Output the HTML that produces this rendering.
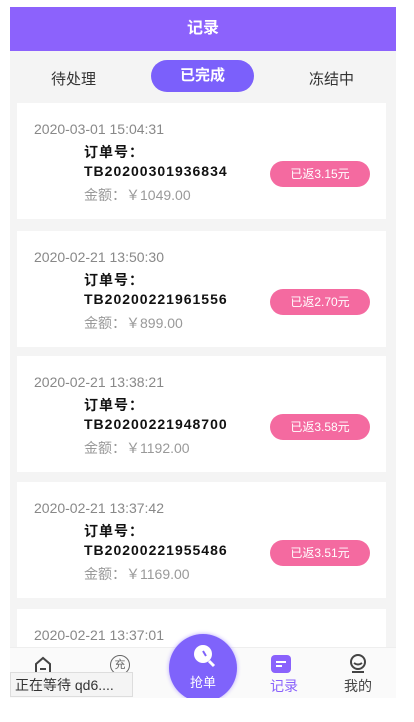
<!DOCTYPE html><html><head><meta charset="utf-8"><style>
body{margin:0;width:414px;height:722px;background:#fff;font-family:"Liberation Sans","Noto Sans CJK SC",sans-serif;position:relative;overflow:hidden}
.wrap{position:absolute;left:10px;top:7px;width:386px;height:691px;background:#f4f4f4;overflow:hidden}
.hd{height:44px;background:#8c62fc;color:#fff;font-weight:bold;font-size:16px;text-align:center;line-height:44px}
.tabs{position:relative;height:51px;font-size:15px;color:#333}
.tabs span{position:absolute;top:17px}
.act{left:141px;top:9px!important;width:103px;height:32px;border-radius:16px;background:#7b60fb;color:#fff;text-align:center;line-height:32px;font-weight:bold}
.card{position:absolute;left:7px;width:369px;height:116px;background:#fff}
.d{position:absolute;left:17px;top:18px;font-size:14px;color:#888}
.o{position:absolute;left:67px;top:40px;font-size:14px;font-weight:bold;color:#111;line-height:19px;letter-spacing:1px}
.m{position:absolute;left:67px;top:82px;font-size:14px;color:#999}
.b{position:absolute;left:253px;top:58px;width:100px;height:26px;border-radius:13px;background:#f46aa0;color:#fff;font-size:12px;text-align:center;line-height:26px}
.nav{position:absolute;left:0;top:640px;width:386px;height:51px;background:#fafafa;border-top:1px solid #eee;font-size:14px;color:#444}
.it{position:absolute;top:28px;width:60px;text-align:center}
</style></head><body><div class="wrap">
<div class="hd">记录</div>
<div class="tabs"><span style="left:41px">待处理</span><span class="act">已完成</span><span style="left:299px">冻结中</span></div>
<div class="card" style="top:96px"><div class="d">2020-03-01 15:04:31</div><div class="o">订单号：<br>TB20200301936834</div><div class="m">金额：￥1049.00</div><div class="b">已返3.15元</div></div>
<div class="card" style="top:224px"><div class="d">2020-02-21 13:50:30</div><div class="o">订单号：<br>TB20200221961556</div><div class="m">金额：￥899.00</div><div class="b">已返2.70元</div></div>
<div class="card" style="top:349px"><div class="d">2020-02-21 13:38:21</div><div class="o">订单号：<br>TB20200221948700</div><div class="m">金额：￥1192.00</div><div class="b">已返3.58元</div></div>
<div class="card" style="top:475px"><div class="d">2020-02-21 13:37:42</div><div class="o">订单号：<br>TB20200221955486</div><div class="m">金额：￥1169.00</div><div class="b">已返3.51元</div></div>
<div class="card" style="top:602px"><div class="d">2020-02-21 13:37:01</div></div>
<div class="nav">
<svg style="position:absolute;left:24px;top:8px" width="18" height="20"><path d="M2 8 L9 2 L16 8 V18 H2 Z" fill="none" stroke="#444" stroke-width="2"/><path d="M6 13h6" stroke="#444" stroke-width="2"/></svg>
<div style="position:absolute;left:100px;top:7px;width:18px;height:18px;border:1.5px solid #666;border-radius:50%;font-size:11px;text-align:center;line-height:18px;color:#666">充</div>
<div class="it" style="left:244px;color:#8a62fc">记录</div>
<div style="position:absolute;left:261px;top:7px;width:20px;height:18px;background:#8a62fc;border-radius:4px"><div style="position:absolute;left:5px;top:6px;width:10px;height:2px;background:#fff"></div><div style="position:absolute;left:5px;top:10px;width:6px;height:2px;background:#fff"></div></div>
<div class="it" style="left:318px">我的</div>
<svg style="position:absolute;left:338px;top:6px" width="20" height="20"><circle cx="10" cy="8" r="7" fill="none" stroke="#444" stroke-width="2"/><path d="M6 9q4 3 8 0M4 18h12" stroke="#444" stroke-width="2" fill="none"/></svg>
</div>
<div style="position:absolute;left:159px;top:627px;width:68px;height:68px;border-radius:50%;background:#7f63fb;box-shadow:0 0 4px #b9a8ff;color:#fff;font-size:13px;text-align:center">
<svg style="position:absolute;left:22px;top:9px" width="26" height="26"><circle cx="12" cy="11" r="9" fill="#fff"/><path d="M12 8l3 5" stroke="#7f63fb" stroke-width="2"/><path d="M18 18l5 5" stroke="#fff" stroke-width="3"/></svg>
<div style="position:absolute;top:38px;width:68px">抢单</div></div>
</div>
<div style="position:absolute;left:10px;top:672px;width:123px;height:25px;background:#f4f4f4;border:1px solid #ddd;font-size:14px;color:#333;line-height:25px;padding-left:4px;box-sizing:border-box">正在等待 qd6....</div>
</body></html>
